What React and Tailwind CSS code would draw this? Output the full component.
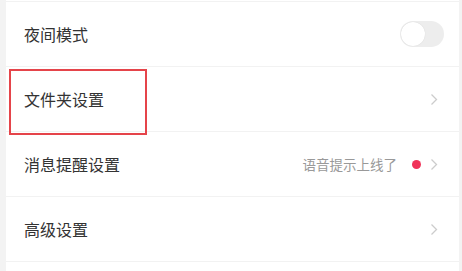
import React from 'react';

const font = { fontFamily: '"Noto Sans CJK SC", "Noto Sans", sans-serif' };

const Chevron = () => (
  <svg width="8" height="13" viewBox="0 0 8 13" className="shrink-0">
    <path d="M1.5 1.5 L6.5 6.5 L1.5 11.5" fill="none" stroke="#cccccc" strokeWidth="1.3" />
  </svg>
);

const Toggle = () => (
  <div className="w-[44px] h-[26px] rounded-full bg-[#ededed] p-[1px] flex items-center">
    <div className="w-[24px] h-[24px] rounded-full bg-white shadow-[0_0_1px_rgba(0,0,0,0.15)]" />
  </div>
);

const Row = ({ label, children }) => (
  <div className="h-[65px] flex items-center justify-between border-b border-[#f2f2f2] pl-[18px] pr-[21px]">
    <span className="text-[16px] text-[#333]">{label}</span>
    <div className="flex items-center">{children}</div>
  </div>
);

export default function App() {
  return (
    <div className="w-[462px] h-[271px] bg-[#f3f3f3] overflow-hidden flex" style={font}>
      <div className="relative ml-[6px] w-[453px] bg-white">
        <div className="h-[2px] border-b border-[#f2f2f2]" />
        <Row label="夜间模式">
          <div className="mr-[-6px]">
            <Toggle />
          </div>
        </Row>
        <Row label="文件夹设置">
          <Chevron />
        </Row>
        <Row label="消息提醒设置">
          <span className="text-[13.5px] text-[#999]">语音提示上线了</span>
          <span className="ml-[15px] mr-[9px] w-[9px] h-[9px] rounded-full bg-[#f03359]" />
          <Chevron />
        </Row>
        <Row label="高级设置">
          <Chevron />
        </Row>

        {/* annotation box over the folder row */}
        <div className="absolute left-[3px] top-[69px] w-[138px] h-[66px] border-[2.5px] border-[#e5444a]" />
      </div>
    </div>
  );
}
